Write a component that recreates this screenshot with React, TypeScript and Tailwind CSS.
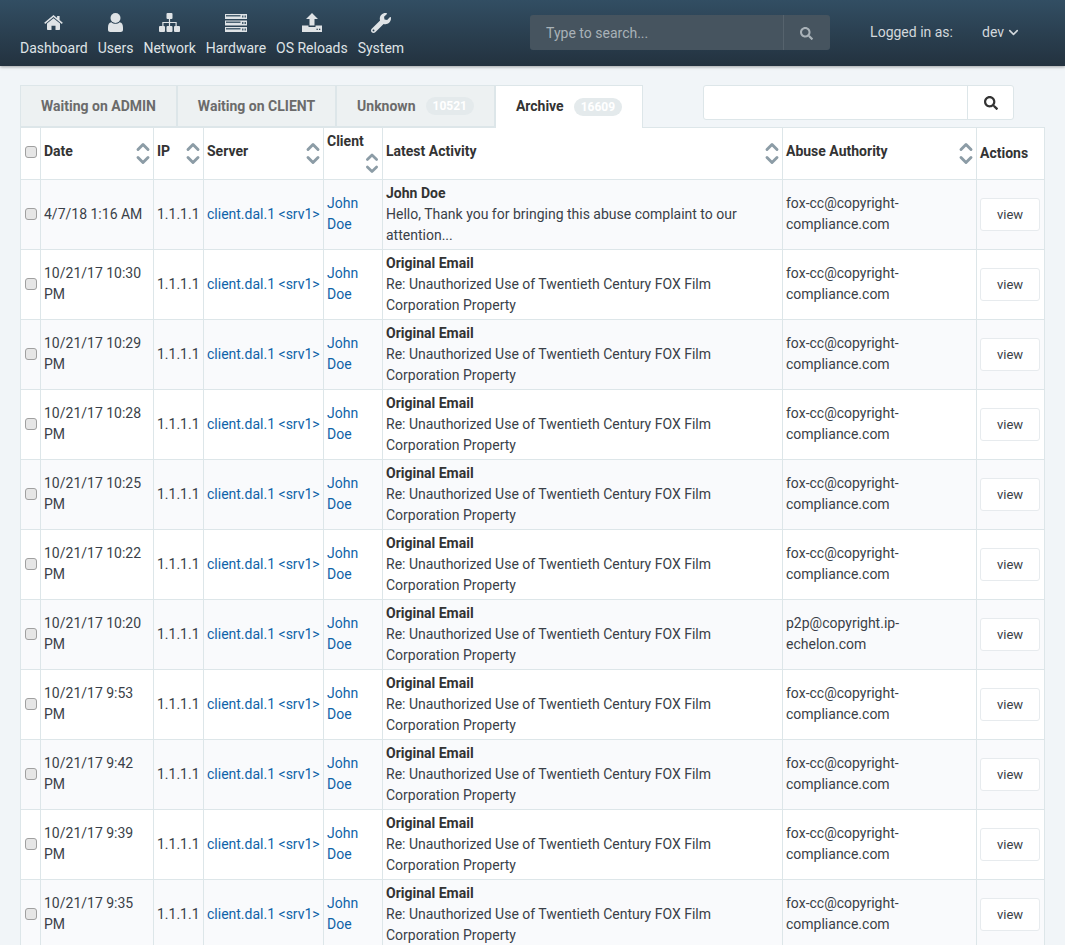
import { FaWrench, FaSearch } from 'react-icons/fa'
import { FiChevronDown, FiChevronUp } from 'react-icons/fi'

function HomeIcon() {
  return (
    <svg width="19" height="15" viewBox="0 0 19 15" fill="currentColor">
      <path d="M9.5 3.2 3 8.6V14.2c0 .4.3.8.8.8h3.7v-4.2h4V15h3.7c.5 0 .8-.4.8-.8V8.6z" />
      <path d="M9.5 0 .2 7.7l1 1.2L9.5 2l8.3 6.9 1-1.2-3.2-2.7V1h-2.5v1.9z" />
    </svg>
  )
}

function UserIcon() {
  return (
    <svg width="15" height="19" viewBox="0 0 15 19" fill="currentColor">
      <circle cx="7.5" cy="5" r="5" />
      <path d="M3.4 9.2c1 .9 2.5 1.6 4.1 1.6s3.100-.7 4.100-1.600C13.900 9.400 15 11.300 15 14.500v2.200c0 1.300-1 2.300-2.300 2.300H2.300C1 19 0 18 0 16.700v-2.200C0 11.300 1.100 9.400 3.400 9.200z" />
    </svg>
  )
}

function NetworkIcon() {
  return (
    <svg width="21" height="19" viewBox="0 0 21 19" fill="currentColor">
      <rect x="7.500" y="0" width="6" height="6" rx="1" />
      <rect x="0" y="13" width="6" height="6" rx="1" />
      <rect x="7.500" y="13" width="6" height="6" rx="1" />
      <rect x="15" y="13" width="6" height="6" rx="1" />
      <path d="M9.900 6h1.200v2.900h6.600V13h-1.200v-2.900h-5.400V13H9.900v-2.900H4.500V13H3.300V8.900h6.600z" />
    </svg>
  )
}

function ServerIcon() {
  return (
    <svg width="22" height="18" viewBox="0 0 22 18">
      {[0, 6.5, 13].map((y) => (
        <g key={y}>
          <rect x="0" y={y} width="22" height="5" fill="#dfe3e6" />
          <rect x="1" y={y + 1} width="14.500" height="1.500" fill="#4b6272" />
          <rect x="17" y={y + 1.5} width="1.500" height="2" fill="#4b6272" />
          <rect x="19.500" y={y + 1.5} width="1.500" height="2" fill="#4b6272" />
        </g>
      ))}
    </svg>
  )
}

function UploadIcon() {
  return (
    <svg width="20" height="19" viewBox="0 0 20 19" fill="currentColor">
      <path d="M10 0l6 6h-3.500v6.500h-5V6H4z" />
      <path d="M0 12.500h6.500v1.500h7v-1.500H20V19H0z" />
      <rect x="14.500" y="15.700" width="1.300" height="1.300" fill="#2c4151" />
      <rect x="17" y="15.700" width="1.300" height="1.300" fill="#2c4151" />
    </svg>
  )
}

const NAV = [
  { label: 'Dashboard', icon: <HomeIcon /> },
  { label: 'Users', icon: <UserIcon /> },
  { label: 'Network', icon: <NetworkIcon /> },
  { label: 'Hardware', icon: <ServerIcon /> },
  { label: 'OS Reloads', icon: <UploadIcon /> },
  { label: 'System', icon: <FaWrench size={20} /> },
]

const TABS = [
  { label: 'Waiting on ADMIN', width: 'w-[157px]' },
  { label: 'Waiting on CLIENT', width: 'w-[159px]' },
  { label: 'Unknown', badge: '10521', width: 'w-[159px]' },
]

const OTHER = 'Re: Unauthorized Use of Twentieth Century FOX Film Corporation Property'
const FOX = 'fox-cc@copyright-compliance.com'

const ROWS = [
  { date: '4/7/18 1:16 AM', title: 'John Doe', body: 'Hello, Thank you for bringing this abuse complaint to our attention...', email: FOX },
  { date: '10/21/17 10:30 PM', title: 'Original Email', body: OTHER, email: FOX },
  { date: '10/21/17 10:29 PM', title: 'Original Email', body: OTHER, email: FOX },
  { date: '10/21/17 10:28 PM', title: 'Original Email', body: OTHER, email: FOX },
  { date: '10/21/17 10:25 PM', title: 'Original Email', body: OTHER, email: FOX },
  { date: '10/21/17 10:22 PM', title: 'Original Email', body: OTHER, email: FOX },
  { date: '10/21/17 10:20 PM', title: 'Original Email', body: OTHER, email: 'p2p@copyright.ip-echelon.com' },
  { date: '10/21/17 9:53 PM', title: 'Original Email', body: OTHER, email: FOX },
  { date: '10/21/17 9:42 PM', title: 'Original Email', body: OTHER, email: FOX },
  { date: '10/21/17 9:39 PM', title: 'Original Email', body: OTHER, email: FOX },
  { date: '10/21/17 9:35 PM', title: 'Original Email', body: OTHER, email: FOX },
]

function Checkbox() {
  return <span className="block w-[12px] h-[12px] rounded-[3px] border border-[#a0a0a0] bg-[#e6e6e6]" />
}

function Sort() {
  return (
    <span className="flex flex-col items-center -mr-[3px] text-[#8c9ca6]">
      <FiChevronUp size={20} strokeWidth={3.5} className="-mb-[7px]" />
      <FiChevronDown size={20} strokeWidth={3.5} />
    </span>
  )
}

function HeadCell({ label }: { label: string }) {
  return (
    <th className="border border-[#dde6e9] px-[3px] align-middle text-left font-bold text-[#333]">
      <div className="flex items-center justify-between">
        <span className="mb-[4px]">{label}</span>
        <Sort />
      </div>
    </th>
  )
}

export default function App() {
  return (
    <div className="h-[945px] overflow-hidden bg-[#f1f5f8] text-[14px] leading-[21px] text-[#3a3f48] font-['Roboto',sans-serif]">
      <header className="h-[66px] flex items-start bg-gradient-to-b from-[#324e63] to-[#23323f] shadow-[0_1px_3px_rgba(0,0,0,0.35)]">
        <nav className="flex gap-[10px] pl-[20px] pt-[10px]">
          {NAV.map(({ label, icon }) => (
            <div key={label} className="flex flex-col items-center text-[#dfe3e6]">
              <span className="h-[25px] flex items-center justify-center">{icon}</span>
              <span className="mt-[3px]">{label}</span>
            </div>
          ))}
        </nav>
        <div className="ml-[126px] mt-[15px] flex h-[35px] w-[300px] rounded-[3px] bg-[#46545f] text-[#a9b2b8]">
          <div className="flex-1 pl-[16px] pt-[1px] flex items-center">Type to search...</div>
          <div className="w-[47px] flex items-center justify-center pr-[2px] pt-[1px] border-l border-[#56636d]">
            <FaSearch size={13} />
          </div>
        </div>
        <div className="ml-[40px] mt-[22px] text-[#d3d8dc]">Logged in as:</div>
        <div className="ml-[29px] mt-[22px] flex items-center gap-[2px] text-[#d3d8dc]">
          dev <FiChevronDown size={15} strokeWidth={2.5} />
        </div>
      </header>

      <main className="px-[20px] pt-[19px]">
        <div className="flex items-start h-[42px]">
          {TABS.map((t) => (
            <div key={t.label} className={`${t.width} h-[42px] flex items-center justify-center gap-[10px] border border-[#dde6e9] bg-[#edf1f2] font-bold text-[#6b6b6b]`}>
              {t.label}
              {t.badge && <span className="rounded-full bg-[#e4eaec] px-[7px] text-[12px] leading-[18px] text-white">{t.badge}</span>}
            </div>
          ))}
          <div className="w-[148px] h-[43px] pb-[1px] flex items-center justify-center gap-[10px] border border-b-0 border-[#dde6e9] bg-white font-bold text-[#333] z-10">
            Archive
            <span className="rounded-full bg-[#e4eaec] px-[7px] text-[12px] leading-[18px] text-white">16609</span>
          </div>
          <div className="ml-[60px] flex h-[35px] w-[311px] rounded-[3px] border border-[#dde6e9] bg-white">
            <div className="flex-1" />
            <div className="w-[46px] flex items-center justify-center border-l border-[#dde6e9] text-[#333]">
              <FaSearch size={14} />
            </div>
          </div>
        </div>

        <table className="table-fixed border-collapse w-[1024px] bg-white">
          <colgroup>
            <col className="w-[20px]" />
            <col className="w-[113px]" />
            <col className="w-[50px]" />
            <col className="w-[120px]" />
            <col className="w-[59px]" />
            <col className="w-[400px]" />
            <col className="w-[194px]" />
            <col className="w-[68px]" />
          </colgroup>
          <thead>
            <tr className="h-[52px]">
              <th className="border border-[#dde6e9]"><span className="flex justify-center mb-[3px]"><Checkbox /></span></th>
              <HeadCell label="Date" />
              <HeadCell label="IP" />
              <HeadCell label="Server" />
              <th className="border border-[#dde6e9] px-[3px] text-left font-bold text-[#333] align-top">
                <div className="h-[21px] pt-[3px]">Client</div>
                <div className="flex justify-end -mt-[1px] h-[30px]"><Sort /></div>
              </th>
              <HeadCell label="Latest Activity" />
              <HeadCell label="Abuse Authority" />
              <th className="border border-[#dde6e9] px-[3px] text-left font-bold text-[#333]">Actions</th>
            </tr>
          </thead>
          <tbody>
            {ROWS.map((r, i) => (
              <tr key={i} className={`h-[70px] ${i % 2 === 0 ? 'bg-[#f9fafc]' : 'bg-white'}`}>
                <td className="border border-[#dde6e9]"><span className="flex justify-center mb-[2px]"><Checkbox /></span></td>
                <td className="border border-[#dde6e9] px-[3px] pb-[1px]">{r.date}</td>
                <td className="border border-[#dde6e9] px-[3px]">1.1.1.1</td>
                <td className="border border-[#dde6e9] px-[3px] whitespace-nowrap text-[#0f63a8]">client.dal.1 &lt;srv1&gt;</td>
                <td className="border border-[#dde6e9] px-[3px] pb-[1px] text-[#0f63a8]">John Doe</td>
                <td className="border border-[#dde6e9] px-[3px]">
                  <div className="font-bold text-[#333]">{r.title}</div>
                  <div>{r.body}</div>
                </td>
                <td className="border border-[#dde6e9] px-[3px] pb-[1px]">{r.email}</td>
                <td className="border border-[#dde6e9] px-[3px]">
                  <div className="w-[60px] h-[33px] flex items-center justify-center rounded-[3px] border border-[#e7ebee] bg-white text-[13px]">view</div>
                </td>
              </tr>
            ))}
          </tbody>
        </table>
      </main>
    </div>
  )
}
